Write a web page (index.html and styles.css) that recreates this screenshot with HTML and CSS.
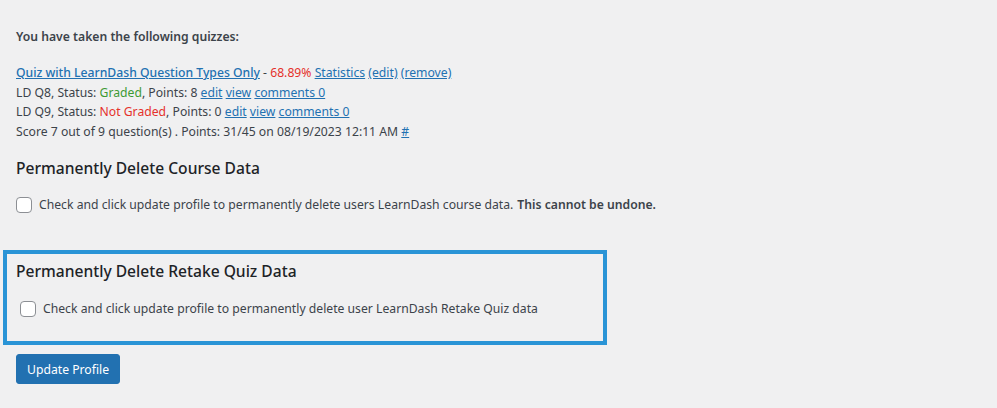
FILE: index.html
```html
<!DOCTYPE html>
<html lang="en">
<head>
<meta charset="utf-8">
<title>Profile</title>
<link rel="stylesheet" href="styles.css">
</head>
<body>
<div class="page">
  <p class="taken"><strong>You have taken the following quizzes:</strong></p>
  <div class="quizzes">
    <p><a href="#" class="quiz-title">Quiz with LearnDash Question Types Only</a> - <span class="bad">68.89%</span> <a href="#">Statistics</a> <a href="#">(edit)</a> <a href="#">(remove)</a></p>
    <p>LD Q8, Status: <span class="good">Graded</span>, Points: 8 <a href="#">edit</a> <a href="#">view</a> <a href="#">comments 0</a></p>
    <p>LD Q9, Status: <span class="bad">Not Graded</span>, Points: 0 <a href="#">edit</a> <a href="#">view</a> <a href="#">comments 0</a></p>
    <p>Score 7 out of 9 question(s) . Points: 31/45 on 08/19/2023 12:11 AM <a href="#">#</a></p>
  </div>

  <h2 class="section-title">Permanently Delete Course Data</h2>
  <p class="check-row"><label><input type="checkbox" class="check"> Check and click update profile to permanently delete users LearnDash course data. <strong>This cannot be undone.</strong></label></p>

  <div class="highlight">
    <h2 class="section-title">Permanently Delete Retake Quiz Data</h2>
    <p class="check-row inset"><label><input type="checkbox" class="check"> Check and click update profile to permanently delete user LearnDash Retake Quiz data</label></p>
  </div>

  <button type="button" class="button-primary">Update Profile</button>
</div>
</body>
</html>
```

FILE: styles.css
```css
html, body {
  margin: 0;
  padding: 0;
  background: #f0f0f1;
}
body {
  font-family: "Noto Sans", "Open Sans", sans-serif;
  font-size: 12.2px;
  color: #3c434a;
}
.page {
  padding: 0 16px;
}
p {
  margin: 0;
}
a {
  color: #2271b1;
  text-decoration: underline;
}
.taken {
  margin-top: 27px;
  line-height: 20px;
}
.taken strong {
  font-weight: 600;
}
.quizzes {
  margin-top: 16px;
}
.quizzes p {
  line-height: 19.5px;
}
.quiz-title {
  font-weight: 500;
}
.bad {
  color: #e5312b;
}
.good {
  color: #3d9a34;
}
.section-title {
  font-size: 15.6px;
  font-weight: 500;
  color: #1d2327;
  line-height: 24px;
  margin: 15px 0 0;
}
.check-row {
  margin-top: 15px;
  line-height: 20px;
}
.check-row label {
  display: inline-flex;
  align-items: center;
}
.check-row strong {
  font-weight: 600;
  margin-left: 4px;
}
.check {
  appearance: none;
  -webkit-appearance: none;
  width: 16px;
  height: 16px;
  margin: 0 7px 0 0;
  border: 1px solid #8c8f94;
  border-radius: 4px;
  background: #fff;
  flex: none;
}
.highlight {
  margin: 31px 0 0 -13px;
  width: 587px;
  border: 4px solid #2a94d6;
  padding: 5px 0 18px 9px;
}
.highlight .section-title {
  margin-top: 0;
}
.check-row.inset {
  margin-top: 16px;
  padding-left: 4px;
}
.button-primary {
  display: block;
  margin-top: 9px;
  height: 30px;
  padding: 0 10px;
  font-family: inherit;
  font-size: 12.2px;
  color: #fff;
  background: #2271b1;
  border: 1px solid #2271b1;
  border-radius: 3px;
}
```
